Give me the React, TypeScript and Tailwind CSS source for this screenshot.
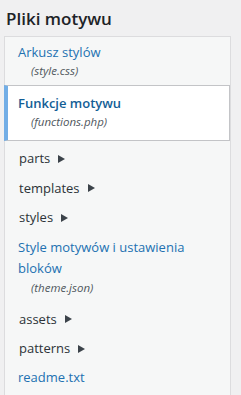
import React from "react";

const font = { fontFamily: '"Open Sans", "Noto Sans", sans-serif' };

function Folder({ name }: { name: string }) {
  return (
    <div className="h-[29.5px] flex items-center pl-[14px] text-[13px] text-[#2c3338]">
      <span>{name}</span>
      <span className="ml-[8px] w-0 h-0 border-y-[4.5px] border-y-transparent border-l-[7px] border-l-[#3c434a]" />
    </div>
  );
}

export default function App() {
  return (
    <div className="w-[241px] h-[395px] bg-[#f0f0f1] overflow-hidden" style={font}>
      <h2 className="pl-[6px] pt-[7px] text-[17px] leading-[24px] font-semibold text-[#1d2327]">Pliki motywu</h2>
      <div className="ml-[4px] mt-[5px] w-[227px] h-[400px] border border-[#dcdcde] bg-[#f6f7f7] flex flex-col">
        <div className="pl-[13px] pt-[5px] pb-[5px]">
          <div className="text-[13px] leading-[20px] text-[#2271b1]">Arkusz stylów</div>
          <div className="pl-[13px] text-[11.5px] italic leading-[18px] text-[#50575e]">(style.css)</div>
        </div>
        <div className="-ml-px bg-white border border-[#c3c4c7] border-l-[4px] border-l-[#72aee6] pl-[10px] pt-[7px] pb-[9px]">
          <div className="text-[13px] leading-[20px] font-semibold text-[#135e96]">Funkcje motywu</div>
          <div className="pl-[13px] text-[11.5px] italic leading-[18px] text-[#50575e]">(functions.php)</div>
        </div>
        <div className="pt-[3px]">
          <Folder name="parts" />
          <Folder name="templates" />
          <Folder name="styles" />
        </div>
        <div className="pl-[13px] pt-[4px]">
          <div className="text-[13px] leading-[21px] text-[#2271b1] w-[200px]">Style motywów i ustawienia bloków</div>
          <div className="pl-[13px] text-[11.5px] italic leading-[18px] text-[#50575e]">(theme.json)</div>
        </div>
        <div className="pt-[8px]">
          <Folder name="assets" />
          <Folder name="patterns" />
        </div>
        <div className="pl-[13px] pt-[3px] text-[13px] leading-[20px] text-[#2271b1]">readme.txt</div>
      </div>
    </div>
  );
}
